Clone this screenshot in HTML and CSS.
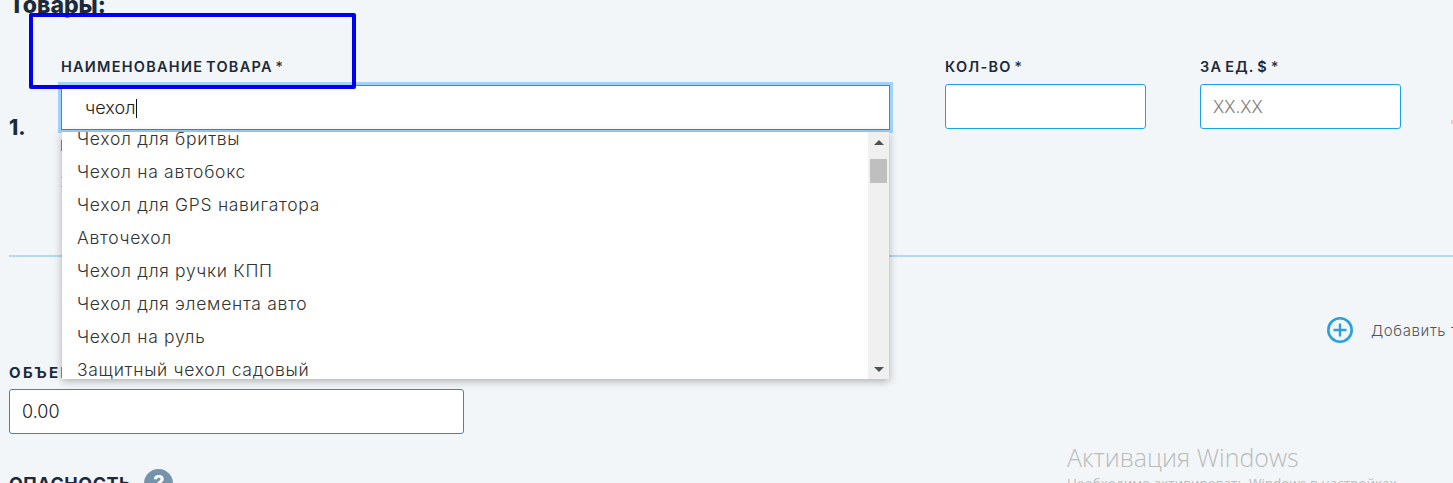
FILE: index.html
```html
<!DOCTYPE html>
<html lang="ru">
<head>
    <meta charset="UTF-8">
    <title>Товары</title>
    <link rel="stylesheet" href="styles.css">
</head>
<body>
    <div class="page">
        <h2 class="title">Товары:</h2>

        <div class="goods-row">
            <div class="num">1.</div>
            <div class="field field-name">
                <label class="label">НАИМЕНОВАНИЕ ТОВАРА <span class="req">*</span></label>
                <div class="input input-focus">чехол<span class="caret"></span></div>
                <span class="hint hint-blue"></span>
                <span class="hint hint-red"></span>
                <ul class="suggest">
                    <li>Чехол для бритвы</li>
                    <li>Чехол на автобокс</li>
                    <li>Чехол для GPS навигатора</li>
                    <li>Авточехол</li>
                    <li>Чехол для ручки КПП</li>
                    <li>Чехол для элемента авто</li>
                    <li>Чехол на руль</li>
                    <li>Защитный чехол садовый</li>
                </ul>
                <div class="scrollbar">
                    <span class="arrow-up"></span>
                    <span class="thumb"></span>
                    <span class="arrow-down"></span>
                </div>
            </div>
            <div class="field field-qty">
                <label class="label">КОЛ-ВО <span class="req">*</span></label>
                <input class="input" type="text">
            </div>
            <div class="field field-qty">
                <label class="label">ЗА ЕД. $ <span class="req">*</span></label>
                <input class="input" type="text" placeholder="XX.XX">
            </div>
        </div>

        <hr class="divider">

        <div class="add-row">
            <svg class="add-icon" width="28" height="28" viewBox="0 0 28 28">
                <circle cx="14" cy="14" r="11.7" fill="none" stroke="#2d9fdc" stroke-width="2.6"/>
                <path d="M14 7.5v13M7.5 14h13" fill="none" stroke="#2d9fdc" stroke-width="2.4"/>
            </svg>
            <span class="add-text">Добавить товар</span>
        </div>

        <div class="volume">
            <label class="label">ОБЪЕМ</label>
            <div class="input input-volume">0.00</div>
        </div>

        <div class="danger">
            <span class="danger-title">ОПАСНОСТЬ</span>
            <span class="help">?</span>
        </div>
    </div>

    <span class="edge-dot"></span>

    <div class="mark">
        <div class="mark-title">Активация Windows</div>
        <div class="mark-text">Необходимо активировать Windows в настройках</div>
    </div>

    <div class="annotation"></div>
</body>
</html>
```

FILE: styles.css
```css
html, body {
    margin: 0;
    height: 483px;
    overflow: hidden;
}
body {
    position: relative;
    background: #f3f6f8;
    color: #1d2a3a;
    font-family: 'Inter', 'Noto Sans', sans-serif;
}
.page {
    padding-left: 9px;
    width: 1600px;
}
.title {
    margin: -8px 0 0;
    font-size: 23px;
    line-height: 26px;
    font-weight: 800;
}
.goods-row {
    display: flex;
    align-items: flex-start;
    margin-top: 39px;
    height: 198px;
}
.num {
    width: 52px;
    padding-top: 58px;
    font-size: 21px;
    font-weight: 800;
    line-height: 26px;
}
.field {
    position: relative;
}
.field-name {
    width: 829px;
    margin-right: 55px;
}
.field-qty {
    width: 201px;
    margin-right: 54px;
}
.label {
    display: block;
    height: 27px;
    font-size: 14.5px;
    line-height: 19px;
    font-weight: 600;
    letter-spacing: 1.25px;
    word-spacing: -2px;
    white-space: nowrap;
}
.req {
    font-weight: 400;
}
.input {
    display: block;
    box-sizing: border-box;
    width: 100%;
    height: 45px;
    padding: 0 12px;
    border: 1px solid #1ba3ea;
    border-radius: 3px;
    background: #fff;
    font-family: inherit;
    font-size: 17px;
    font-weight: 300;
    line-height: 43px;
    color: #222;
    outline: none;
}
.input::placeholder {
    color: #7d7d7d;
}
.input-focus {
    height: 45px;
    margin-top: 1px;
    padding-left: 23px;
    border-color: #2b90d0;
    border-radius: 0;
    box-shadow: 0 0 0 3px #9fd3fb;
    font-size: 18px;
}
.caret {
    display: inline-block;
    width: 1px;
    height: 19px;
    margin-left: 1px;
    background: #111;
    vertical-align: -4px;
}
.hint {
    position: absolute;
    left: 0;
    width: 1px;
}
.hint-blue {
    top: 83px;
    height: 11px;
    background: #7f8fb8;
}
.hint-red {
    top: 120px;
    height: 8px;
    border-top: 1px solid #f2a0a8;
    border-bottom: 1px solid #f2a0a8;
}
.suggest {
    position: absolute;
    top: 75px;
    left: 1px;
    width: 827px;
    height: 247px;
    margin: 0;
    padding: 0;
    overflow: hidden;
    list-style: none;
    background: #fff;
    box-shadow: 0 2px 8px rgba(0, 0, 0, 0.3);
    font-size: 17.5px;
    font-weight: 300;
    letter-spacing: 0.7px;
    color: #333;
}
.suggest li {
    height: 33px;
    line-height: 33px;
    padding-left: 15px;
    position: relative;
    top: -10px;
    white-space: nowrap;
}
.scrollbar {
    position: absolute;
    top: 75px;
    left: 807px;
    width: 21px;
    height: 247px;
    background: #f0f0f0;
}
.thumb {
    position: absolute;
    top: 27px;
    left: 2px;
    width: 17px;
    height: 24px;
    background: #bfbfbf;
}
.arrow-up, .arrow-down {
    position: absolute;
    left: 6px;
    border-left: 5px solid transparent;
    border-right: 5px solid transparent;
}
.arrow-up {
    top: 8px;
    border-bottom: 5px solid #505050;
}
.arrow-down {
    bottom: 7px;
    border-top: 5px solid #505050;
}
.divider {
    margin: 0;
    border: 0;
    border-top: 2px solid #b6d8ec;
}
.add-row {
    display: flex;
    align-items: center;
    gap: 17px;
    margin: 59px 0 0 1317px;
    height: 28px;
}
.add-icon {
    flex: none;
}
.add-text {
    font-size: 15px;
    font-weight: 300;
    letter-spacing: 0.6px;
    color: #555;
    white-space: nowrap;
}
.volume {
    margin-top: 19px;
}
.volume .label {
    height: 26px;
    font-size: 15px;
    font-weight: 700;
    letter-spacing: 2.4px;
}
.input-volume {
    width: 455px;
    border-color: #3a86b5;
    font-size: 18px;
}
.danger {
    display: flex;
    align-items: center;
    gap: 13px;
    margin-top: 35px;
}
.danger-title {
    font-size: 18px;
    font-weight: 700;
    letter-spacing: 0.5px;
}
.help {
    width: 29px;
    height: 29px;
    border-radius: 50%;
    background: #7593ab;
    color: #fff;
    font-size: 20px;
    font-weight: 700;
    line-height: 29px;
    text-align: center;
}
.edge-dot {
    position: absolute;
    left: 1451px;
    top: 120px;
    width: 2px;
    height: 4px;
    background: #f5c6d2;
}
.mark {
    position: absolute;
    left: 1067px;
    top: 441px;
    font-family: 'Open Sans', sans-serif;
    color: #b9bbbc;
    white-space: nowrap;
}
.mark-title {
    font-size: 25px;
    line-height: 33px;
    font-weight: 300;
}
.mark-text {
    font-size: 13.5px;
    line-height: 18px;
}
.annotation {
    position: absolute;
    left: 29px;
    top: 13px;
    width: 319px;
    height: 68px;
    border: 4px solid #0000f0;
    border-radius: 2px;
}
```
